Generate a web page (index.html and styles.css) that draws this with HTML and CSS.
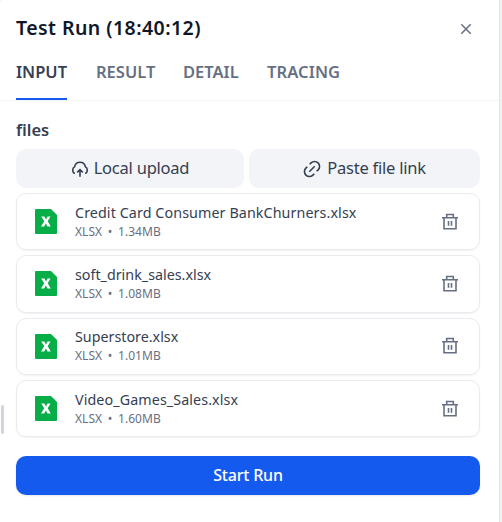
FILE: index.html
```
<!DOCTYPE html>
<html lang="en">
<head>
<meta charset="utf-8">
<title>Test Run</title>
<link rel="stylesheet" href="styles.css">
</head>
<body>
<svg class="defs" aria-hidden="true">
  <symbol id="sheet" viewBox="0 0 22 25"><path fill="#07ae48" d="M1 0H16L22 6V24a1 1 0 0 1-1 1H1a1 1 0 0 1-1-1V1a1 1 0 0 1 1-1Z"/><path d="M6.200 7.500H9.400L11 10.400 12.600 7.500H15.500L12.700 12.200 15.800 17.500H12.500L10.900 14.400 9.200 17.500H6L9.200 12.200Z" fill="#fff"/></symbol>
  <symbol id="trash" viewBox="0 0 18 18"><path d="M1 4.700H17M3 5V15.800H15V5M5.700 4.500V1.500H12.300V4.500M7.500 8.100V12.700M10.500 8.100V12.700" fill="none" stroke="currentColor" stroke-width="1.600"/></symbol>
</svg>
<main class="panel">
  <header class="head">
    <h1 class="title">Test Run (18:40:12)</h1>
    <svg class="close" viewBox="0 0 12 12"><path d="M1.300 1.300 10.700 10.700M10.700 1.300 1.300 10.700" fill="none" stroke="currentColor" stroke-width="1.500"/></svg>
  </header>
  <nav class="tabs">
    <span class="tab active">INPUT</span><span class="tab result">RESULT</span><span class="tab detail">DETAIL</span><span class="tab tracing">TRACING</span>
  </nav>
  <section class="content">
    <h2 class="label">files</h2>
    <div class="sources">
      <div class="source">
        <svg class="source-icon" viewBox="0 0 18 18"><path d="M3.800 13.600A4 4 0 0 1 3.700 6.600A5.400 5.400 0 0 1 14.300 6.600A4 4 0 0 1 14.200 13.600M9 16.700V10.500M6.200 12.400 9 9.600 11.800 12.400" fill="none" stroke="currentColor" stroke-width="1.600"/></svg>
        <span class="local">Local upload</span>
      </div>
      <div class="source">
        <svg class="source-icon link" viewBox="0 0 18 18"><path d="M6.700 4.300 8.100 2.900A4.300 4.300 0 0 1 15.100 9.900L13.700 11.300M11.300 13.700 9.900 15.100A4.300 4.300 0 0 1 2.900 8.100L4.300 6.700M6.300 11.700 11.700 6.300" fill="none" stroke="currentColor" stroke-width="1.600"/></svg>
        <span class="paste">Paste file link</span>
      </div>
    </div>
    <ul class="files">
      <li class="file"><svg class="sheet"><use href="#sheet"/></svg><div class="info"><div class="name n1">Credit Card Consumer BankChurners.xlsx</div><div class="meta"><span>XLSX</span><span class="dot">•</span><span>1.34MB</span></div></div><svg class="trash"><use href="#trash"/></svg></li>
      <li class="file"><svg class="sheet"><use href="#sheet"/></svg><div class="info"><div class="name n2">soft_drink_sales.xlsx</div><div class="meta"><span>XLSX</span><span class="dot">•</span><span>1.08MB</span></div></div><svg class="trash"><use href="#trash"/></svg></li>
      <li class="file"><svg class="sheet"><use href="#sheet"/></svg><div class="info"><div class="name n3">Superstore.xlsx</div><div class="meta"><span>XLSX</span><span class="dot">•</span><span>1.01MB</span></div></div><svg class="trash"><use href="#trash"/></svg></li>
      <li class="file"><svg class="sheet"><use href="#sheet"/></svg><div class="info"><div class="name n4">Video_Games_Sales.xlsx</div><div class="meta"><span>XLSX</span><span class="dot">•</span><span>1.60MB</span></div></div><svg class="trash"><use href="#trash"/></svg></li>
    </ul>
    <div class="start"><span>Start Run</span></div>
  </section>
  <div class="handle"></div>
</main>
</body>
</html>
```
FILE: styles.css
```
* { box-sizing: border-box; }
body { margin: 0; background: #f0f1f3; font-family: "Noto Sans", "Open Sans", sans-serif; color: #354052; }
h1, h2, ul { margin: 0; padding: 0; }
svg { display: block; flex: none; }
.defs { position: absolute; width: 0; height: 0; }
.panel { position: relative; width: 500px; height: 522px; background: #fff; border-right: 1px solid #e4e5e8; border-top-left-radius: 3px; overflow: hidden; white-space: nowrap; }
.head { height: 56px; padding: 0 27px 0 16px; display: flex; align-items: center; justify-content: space-between; }
.title { font-size: 19.500px; letter-spacing: .44px; line-height: 28px; font-weight: 600; color: #101828; }
.close { width: 12px; height: 12px; margin-top: 1px; color: #676f83; }
.tabs { height: 45px; padding-left: 16px; display: flex; gap: 29px; border-bottom: 1px solid #f2f3f5; }
.tab { height: 44px; font-size: 16.500px; line-height: 32px; font-weight: 600; color: #676f83; }
.active { width: 51px; color: #354052; border-bottom: 2px solid #155aef; }
.result { width: 58px; }
.detail { width: 55px; }
.tracing { letter-spacing: .1px; }
.content { padding: 16px 19px 0 16px; }
.label { font-size: 16.500px; line-height: 26px; height: 32px; font-weight: 600; }
.sources { display: grid; grid-template-columns: 228px 231px; gap: 5px; }
.source { height: 39px; padding-bottom: 2px; border-radius: 10px; background: #f2f4f7; display: flex; align-items: center; justify-content: center; gap: 5px; font-size: 16.500px; letter-spacing: -.23px; }
.source-icon { width: 18px; height: 18px; margin-top: 2px; }
.link { margin-right: 1px; }
.files { list-style: none; margin-top: 5px; display: grid; gap: 5px; }
.file { height: 57.300px; padding: 0 20.500px 0 18px; display: flex; align-items: center; border: 1px solid #e9ebf0; border-radius: 10px; box-shadow: 0 1px 2px rgba(16, 24, 40, .06); }
.sheet { width: 22px; height: 25px; }
.info { flex: 1; margin-left: 18px; }
.name { font-size: 14.300px; letter-spacing: .09px; line-height: 20px; }
.n2, .n3 { letter-spacing: 0; }
.meta { display: flex; font-size: 12px; letter-spacing: .03px; line-height: 18px; color: #676f83; }
.dot { width: 16px; text-align: center; }
.trash { width: 18px; height: 18px; color: #676f83; }
.start { margin-top: 19px; height: 39px; padding-bottom: 1px; border-radius: 10px; background: #155aef; color: #fff; display: flex; align-items: center; justify-content: center; font-size: 16px; letter-spacing: -.2px; font-weight: 500; box-shadow: 0 1px 2px rgba(16, 24, 40, .1); }
.handle { position: absolute; left: 1px; top: 405px; width: 3px; height: 29px; border-radius: 2px; background: #d0d5dd; }
```
